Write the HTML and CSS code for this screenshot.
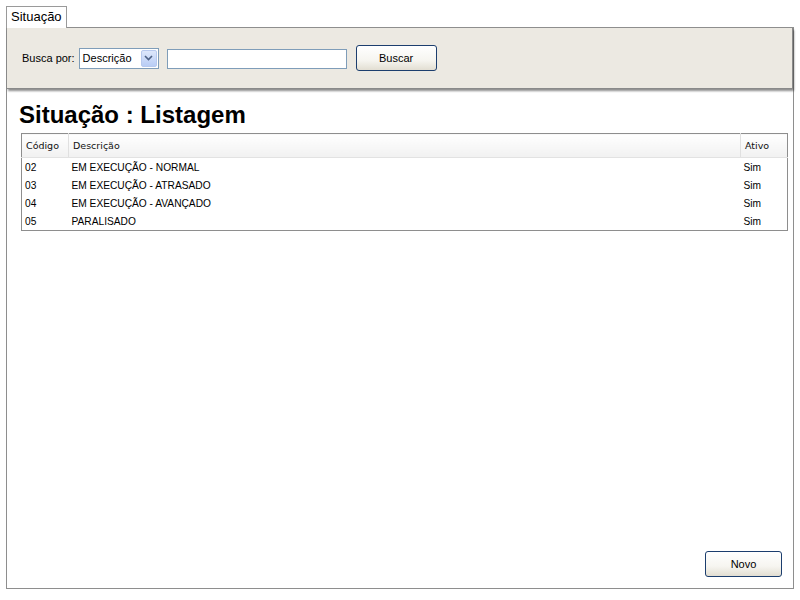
FILE: index.html
```html
<!DOCTYPE html>
<html lang="pt">
<head>
<meta charset="utf-8">
<title>Situação</title>
<link rel="stylesheet" href="styles.css">
</head>
<body>
<div class="tabs"><div class="tab">Situação</div></div>
<div class="panel">
  <div class="search">
    <span class="label">Busca por:</span>
    <div class="select"><span class="select-text">Descrição</span><span class="select-btn"><svg width="9" height="6" viewBox="0 0 9 6"><path d="M1 1 L4.5 4.5 L8 1" fill="none" stroke="#4d6185" stroke-width="1.6"/></svg></span></div>
    <input class="field" type="text">
    <button class="btn btn-buscar">Buscar</button>
  </div>
  <h1 class="title">Situação : Listagem</h1>
  <table class="grid">
    <thead>
      <tr><th class="c-cod">Código</th><th class="c-desc">Descrição</th><th class="c-at">Ativo</th></tr>
    </thead>
    <tbody>
      <tr><td>02</td><td>EM EXECUÇÃO - NORMAL</td><td>Sim</td></tr>
      <tr><td>03</td><td>EM EXECUÇÃO - ATRASADO</td><td>Sim</td></tr>
      <tr><td>04</td><td>EM EXECUÇÃO - AVANÇADO</td><td>Sim</td></tr>
      <tr><td>05</td><td>PARALISADO</td><td>Sim</td></tr>
    </tbody>
  </table>
  <div class="spacer"></div>
  <div class="footer"><button class="btn btn-novo">Novo</button></div>
</div>
</body>
</html>
```
FILE: styles.css
```css
html, body {
  margin: 0;
  padding: 0;
  background: #fff;
  font-family: "Liberation Sans", Arial, sans-serif;
  color: #000;
}
.tabs {
  display: flex;
  padding: 6px 0 0 6px;
  position: relative;
  z-index: 2;
}
.tab {
  border: 1px solid #9a9a9a;
  border-bottom: none;
  background: #fff;
  height: 21px;
  line-height: 19px;
  padding: 0 4px 0 4px;
  font-size: 13px;
  margin-bottom: -1px;
  width: 51px;
}
.panel {
  margin: 0 6px 0 6px;
  border: 1px solid #8e8e8e;
  height: 560px;
  display: flex;
  flex-direction: column;
  box-sizing: content-box;
}
.search {
  background: #ece9e2;
  border-right: 1px solid #8a8a8a;
  border-bottom: 1px solid #8a8a8a;
  box-shadow: 1px 2px 2px rgba(0,0,0,0.45);
  height: 60px;
  display: flex;
  align-items: center;
  padding: 0 0 0 15px;
  font-size: 11px;
  font-family: "DejaVu Sans", Tahoma, sans-serif;
}
.label {
  font-family: "Liberation Sans", Arial, sans-serif;
  font-size: 11px;
  margin-right: 4px;
}
.select {
  display: flex;
  align-items: center;
  width: 78px;
  height: 19px;
  border: 1px solid #7f9db9;
  background: #fff;
}
.select-text {
  flex: 1;
  padding-left: 3px;
  font-family: "Liberation Sans", Arial, sans-serif;
  font-size: 11px;
}
.select-btn {
  width: 16px;
  height: 17px;
  margin-right: 1px;
  background: linear-gradient(#dde7fb, #b9cdf5);
  border: 1px solid #b7c9ee;
  border-radius: 2px;
  box-sizing: border-box;
  display: flex;
  align-items: center;
  justify-content: center;
}
.field {
  width: 180px;
  height: 20px;
  box-sizing: border-box;
  border: 1px solid #7f9db9;
  margin: 1px 0 0 8px;
  padding: 0;
  background: #fff;
}
.btn {
  font-family: "Liberation Sans", Arial, sans-serif;
  font-size: 11px;
  color: #000;
  border: 1px solid #1c3e6e;
  border-radius: 3px;
  background: linear-gradient(#ffffff 0%, #f6f5f0 60%, #e2ded2 100%);
  height: 26px;
  padding: 0;
  cursor: pointer;
}
.btn-buscar {
  width: 81px;
  margin-left: 9px;
}
.title {
  margin: 12px 0 0 12px;
  font-size: 24px;
  font-weight: bold;
  line-height: 28px;
  font-family: "Liberation Sans", Arial, sans-serif;
}
.grid {
  margin: 4px 6px 0 14px;
  border: 1px solid #8e8e8e;
  border-collapse: collapse;
  font-size: 10px;
  width: 767px;
}
.grid th {
  font-weight: normal;
  text-align: left;
  height: 23px;
  padding: 0 4px;
  background: linear-gradient(#ffffff, #f1f1f1);
  border-bottom: 1px solid #e2e2e2;
  border-left: 1px solid #e0e0e0;
  font-family: "DejaVu Sans", Verdana, sans-serif;
  font-size: 9.5px;
  color: #111;
}
.grid th:first-child { border-left: none; }
.grid .c-cod { width: 38px; }
.grid .c-at { width: 38px; }
.grid td {
  height: 18px;
  padding: 0 3px;
  font-size: 10.2px;
}
.spacer { flex: 1; }
.footer {
  display: flex;
  justify-content: flex-end;
  padding: 0 11px 11px 0;
}
.btn-novo {
  width: 77px;
}
```
